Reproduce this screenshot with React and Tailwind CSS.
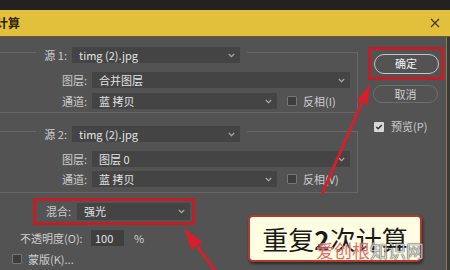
import React from "react";

const Chevron = () => (
  <svg width="7" height="5" viewBox="0 0 7 5" className="shrink-0">
    <path d="M0.8 1 L3.5 3.7 L6.2 1" fill="none" stroke="#a9a9a9" strokeWidth="1.2" />
  </svg>
);

function Dropdown({ w, text, h = "h-[16px]" }) {
  return (
    <div className={`${w} ${h} bg-[#444444] flex items-center justify-between pl-[7px] pr-[5px] text-[11px] text-[#e2e2e2] leading-none`}>
      <span>{text}</span>
      <Chevron />
    </div>
  );
}

const Box = () => <div className="w-[10px] h-[10px] border border-[#767676] bg-[#3d3d3d] rounded-[1px] shrink-0" />;

function Group({ num, file, layer, chan, inv, last }) {
  return (
    <div>
      <div className="flex items-start h-[16px]">
        <div className="w-[36px] h-px bg-[#676767] mt-[5px]" />
        <div className="w-[36px] h-[16px] flex items-center justify-end pr-[5px] text-[11px] text-[#cdcdcd] leading-none">源 {num}:</div>
        <Dropdown w="w-[168px]" text={file} />
        <div className="flex-1 ml-[7px] mt-[5px] h-[11px] border-t border-r border-[#676767]" />
      </div>
      <div className={`border-r border-b border-[#676767] pt-[9px] ${last ? "pb-[5px]" : "pb-[3px]"}`}>
        <div className="flex items-center h-[16px]">
          <div className="w-[92px] text-right pr-[5px] text-[11px] text-[#cdcdcd] leading-none">图层:</div>
          <Dropdown w="w-[258px]" text={layer} />
        </div>
        <div className={`flex items-center h-[16px] ${last ? "mt-[4px]" : "mt-[5px]"}`}>
          <div className="w-[92px] text-right pr-[5px] text-[11px] text-[#cdcdcd] leading-none">通道:</div>
          <Dropdown w="w-[185px]" text={chan} />
          <div className="ml-[10px]"><Box /></div>
          <span className="ml-[6px] text-[11px] text-[#cdcdcd] leading-none">{inv}</span>
        </div>
      </div>
    </div>
  );
}

export default function App() {
  return (
    <div className="w-[450px] h-[270px] relative overflow-hidden bg-[#2e2e2e] font-['Noto_Sans_CJK_SC','Liberation_Sans',sans-serif]">
      <div className="h-[10px] bg-[#212121]" />
      <div className="h-[27px] bg-[#e3c03c] border-b border-[#6a5d34] flex items-center justify-between pr-[10px]">
        <span className="-ml-[4px] text-[12px] font-bold text-[#2b2200] leading-none">计算</span>
        <svg width="10" height="10" viewBox="0 0 10 10">
          <path d="M1 1 L9 9 M9 1 L1 9" stroke="#4a3c12" strokeWidth="1.3" />
        </svg>
      </div>
      <div className="flex h-[233px]">
        <div className="w-[446px] bg-[#535353] flex">
          <div className="w-[358px] flex flex-col pt-[10px]">
            <Group num="1" file="timg (2).jpg" layer="合并图层" chan="蓝 拷贝" inv="反相(I)" />
            <div className="mt-[13px]">
              <Group num="2" file="timg (2).jpg" layer="图层 0" chan="蓝 拷贝" inv="反相(V)" last />
            </div>
            <div className="mt-[5px] ml-[33px] w-[162px] h-[27px] border-[3px] border-[#c11f27] flex items-center">
              <div className="w-[41px] text-right pr-[6px] text-[11px] text-[#cdcdcd] leading-none">混合:</div>
              <Dropdown w="w-[113px]" h="h-[17px]" text="强光" />
            </div>
            <div className="mt-[5px] flex items-center h-[16px]">
              <div className="ml-[20px] w-[71px] text-[11px] text-[#cdcdcd] leading-none">不透明度(O):</div>
              <div className="w-[33px] h-[16px] bg-[#3f3f3f] flex items-center pl-[4px] text-[11px] text-[#e6e6e6] leading-none">100</div>
              <span className="ml-[10px] text-[11px] text-[#cdcdcd] leading-none">%</span>
            </div>
            <div className="mt-[8px] flex items-center h-[10px]">
              <div className="ml-[12px]"><Box /></div>
              <span className="ml-[6px] text-[11px] text-[#cdcdcd] leading-none">蒙版(K)...</span>
            </div>
          </div>
          <div className="flex-1 flex flex-col pt-[10px] pl-[10px]">
            <div className="w-[76px] h-[33px] border-[3px] border-[#c11f27] flex items-center justify-center">
              <div className="w-[65px] h-[20px] rounded-full border border-[#c6c6c6] flex items-center justify-center text-[11px] text-[#f4f4f4] leading-none">确定</div>
            </div>
            <div className="mt-[5px] ml-[5px] w-[65px] h-[18px] rounded-full border border-[#6e6e6e] flex items-center justify-center text-[11px] text-[#d2d2d2] leading-none">取消</div>
            <div className="mt-[18px] ml-[6px] flex items-center">
              <div className="w-[10px] h-[10px] bg-[#d8d8d8] rounded-[1px] flex items-center justify-center">
                <svg width="8" height="8" viewBox="0 0 8 8"><path d="M1.3 4 L3.2 5.8 L6.8 2" fill="none" stroke="#333" strokeWidth="1.5" /></svg>
              </div>
              <span className="ml-[7px] text-[11px] text-[#cdcdcd] leading-none">预览(P)</span>
            </div>
          </div>
        </div>
        <div className="w-px bg-[#8f7c3a]" />
        <div className="flex-1 bg-[#3a3a3a]" />
      </div>

      <div className="absolute left-[248px] top-[215px] w-[174px] h-[47px] bg-[#fffde2] border-2 border-[#b23a2c] rounded-[5px] shadow-[1px_2px_3px_rgba(0,0,0,0.5)] flex items-center justify-center text-[26px] text-[#1a1a1a] leading-none">
        <span>重复<b>2</b>次计算</span>
      </div>
      <div className="absolute left-[316px] top-[241px] text-[18px] leading-none opacity-85">
        <span className="text-[#e0584c] [text-shadow:0_0_1px_#fff,0_0_1px_#fff]">爱创根</span>
        <span className="text-[#c9cad8] [text-shadow:0_0_1px_#333,0_0_1px_#333]">知识网</span>
      </div>

      <svg className="absolute left-0 top-0 pointer-events-none" width="450" height="270" viewBox="0 0 450 270">
        <line x1="322" y1="194" x2="362" y2="102" stroke="#d4202a" strokeWidth="3" />
        <polygon points="370,84 367.5,104.7 356.5,99.9" fill="#d4202a" />
        <line x1="216" y1="272" x2="196.7" y2="246" stroke="#d4202a" strokeWidth="3" />
        <polygon points="184,228 202.4,242 191,250" fill="#d4202a" />
      </svg>
    </div>
  );
}
